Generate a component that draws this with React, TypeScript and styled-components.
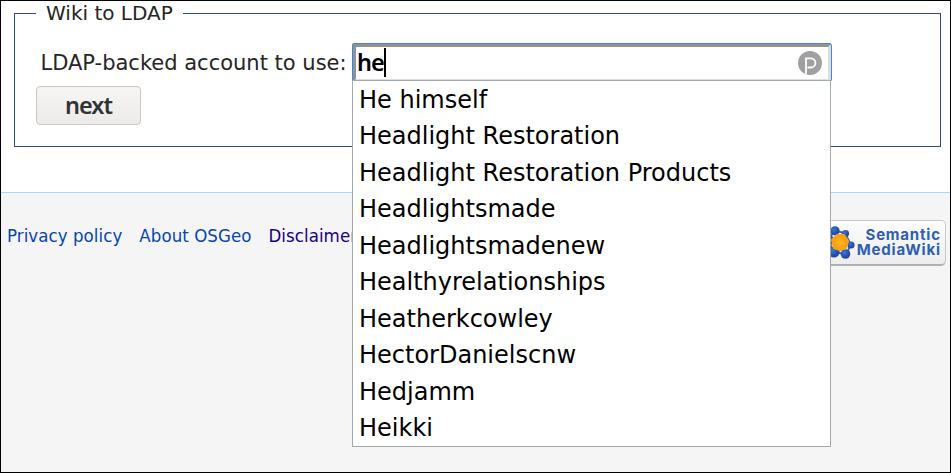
import React from "react";
import styled, { createGlobalStyle } from "styled-components";

const GlobalStyle = createGlobalStyle`
  *, *::before, *::after { box-sizing: border-box; }
  body { margin: 0; background: #fff; }
`;

const Page = styled.div`
  width: 951px;
  height: 473px;
  border: 1px solid #000;
  overflow: hidden;
  display: flex;
  flex-direction: column;
  background: #fff;
  color: #252525;
  font-family: "DejaVu Sans", sans-serif;
`;

const Content = styled.main`
  height: 191px;
  flex: none;
  padding: 0 9px 0 13px;
`;

const Fieldset = styled.fieldset`
  height: 146px;
  min-width: 0;
  margin: 0;
  padding: 0 21px;
  border: 1px solid #2a4b8d;
`;

const Legend = styled.legend`
  height: 25px;
  padding: 0 10px;
  font-size: 20px;
  line-height: 25px;
  white-space: nowrap;
`;

const FormRow = styled.div`
  display: flex;
  height: 38px;
  margin-top: 17px;
  padding-left: 4.5px;
`;

const Label = styled.label`
  width: 311.5px;
  flex: none;
  font-size: 21px;
  line-height: 40px;
  white-space: nowrap;
`;

const Combo = styled.div`
  position: relative;
  width: 480px;
  height: 39px;
  flex: none;
`;

const Field = styled.div`
  display: flex;
  align-items: flex-start;
  height: 39px;
  padding: 0 6px 0 1px;
  background: #fff;
  border: 4px solid;
  border-color: #929292 #dedede #dedede #929292;
  border-bottom-width: 3px;
  border-radius: 3px;
  &::after {
    content: "";
    position: absolute;
    inset: 0;
    border: 1px solid #3d86e0;
    border-radius: 3px;
  }
`;

const Typed = styled.span`
  width: 27px;
  color: #000;
  font: 600 23.5px/30px "Noto Sans", sans-serif;
  letter-spacing: -1px;
`;

const Caret = styled.span`
  width: 2px;
  height: 29px;
  margin-top: 1px;
  background: #000;
`;

const FieldIcon = styled.svg`
  width: 24px;
  height: 24px;
  margin: 4px 0 0 auto;
`;

const Suggestions = styled.ul`
  position: absolute;
  top: 37px;
  left: 0;
  z-index: 2;
  width: 479px;
  height: 367px;
  margin: 0;
  padding: 0.5px 6px 0;
  list-style: none;
  background: #fff;
  border: 1px solid #a2a9b1;
`;

const Suggestion = styled.li`
  height: 36.5px;
  color: #000;
  font-size: 24px;
  line-height: 36.5px;
  white-space: nowrap;
`;

const NextButton = styled.button`
  display: block;
  width: 105px;
  height: 39px;
  margin-top: 5px;
  padding: 0;
  border: 1px solid #cdc7c2;
  border-radius: 4px;
  background: linear-gradient(#f6f5f4, #edebe9);
  color: #2e3436;
  font: 600 23.5px/37px "Noto Sans", sans-serif;
  letter-spacing: -1px;
`;

const Footer = styled.footer`
  display: flex;
  justify-content: space-between;
  flex: 1;
  padding: 27px 4px 0 6px;
  background: #f5f5f5;
  border-top: 1px solid #a7d7f9;
`;

const Links = styled.nav`
  display: flex;
  gap: 17px;
  padding-top: 5px;
`;

const FooterLink = styled.a<{ $visited?: boolean }>`
  color: ${(p) => (p.$visited ? "#1b0080" : "#0645ad")};
  font-family: "DejaVu Sans Condensed", "DejaVu Sans", sans-serif;
  font-stretch: condensed;
  font-size: 18.5px;
  letter-spacing: 0.06px;
  line-height: 22px;
  white-space: nowrap;
`;

const Badge = styled.div`
  display: flex;
  align-items: center;
  justify-content: space-between;
  width: 132px;
  height: 46px;
  padding: 0 5px 0 3px;
  border: 1px solid #c8c8c8;
  border-width: 1px 1px 2px;
  border-bottom-color: #b0b0b0;
  border-radius: 5px;
  background: linear-gradient(#fdfdfd, #ededed);
`;

const Molecule = styled.svg`
  width: 38px;
  height: 34px;
  flex: none;
`;

const BadgeText = styled.div`
  display: flex;
  flex-direction: column;
  align-items: flex-end;
  color: #2d5fb5;
`;

const BadgeLine = styled.span`
  font: 700 15px/14.5px Inter, sans-serif;
  letter-spacing: 0.8px;
  margin-right: -0.8px;
`;

const names = [
  "He himself",
  "Headlight Restoration",
  "Headlight Restoration Products",
  "Headlightsmade",
  "Headlightsmadenew",
  "Healthyrelationships",
  "Heatherkcowley",
  "HectorDanielscnw",
  "Hedjamm",
  "Heikki",
];

export default function App() {
  return (
    <>
      <GlobalStyle />
      <Page>
        <Content>
          <Fieldset>
            <Legend>Wiki to LDAP</Legend>
            <FormRow>
              <Label>LDAP-backed account to use:</Label>
              <Combo>
                <Field>
                  <Typed>he</Typed>
                  <Caret />
                  <FieldIcon viewBox="0 0 24 24">
                    <circle cx="12" cy="12" r="12" fill="#a0a0a0" />
                    <path
                      d="M8 23.5V7.3H12.8a4.6 4.6 0 0 1 0 9.2H9.5"
                      fill="none"
                      stroke="#fff"
                      strokeWidth="1.8"
                    />
                  </FieldIcon>
                </Field>
                <Suggestions>
                  {names.map((n) => (
                    <Suggestion key={n}>{n}</Suggestion>
                  ))}
                </Suggestions>
              </Combo>
            </FormRow>
            <NextButton>next</NextButton>
          </Fieldset>
        </Content>
        <Footer>
          <Links>
            <FooterLink>Privacy policy</FooterLink>
            <FooterLink>About OSGeo</FooterLink>
            <FooterLink $visited>Disclaimers</FooterLink>
          </Links>
          <Badge>
            <Molecule viewBox="0 0 38 34">
              <defs>
                <radialGradient id="core">
                  <stop offset="0" stopColor="#ffb81c" />
                  <stop offset="1" stopColor="#f39a10" />
                </radialGradient>
                <radialGradient id="atom" cx="0.4" cy="0.35">
                  <stop offset="0" stopColor="#3f74d6" />
                  <stop offset="1" stopColor="#1c4cab" />
                </radialGradient>
              </defs>
              <path
                d="M16 4.5L27 7L33 19L28 28L15 26L11 14Z"
                fill="none"
                stroke="#5a5f78"
                strokeWidth="2"
              />
              <g fill="url(#atom)">
                <circle cx="17" cy="4.8" r="4.6" />
                <circle cx="27.5" cy="7.5" r="3.6" />
                <circle cx="33" cy="19" r="3.6" />
                <circle cx="27.5" cy="28" r="4.8" />
                <circle cx="16" cy="26" r="5.6" />
                <circle cx="11" cy="14" r="5" />
              </g>
              <path
                d="M19 9L26 9L30 15L28 22L22 24L16 22L14 14Z"
                fill="url(#core)"
                stroke="#f6a314"
                strokeWidth="2"
                strokeLinejoin="round"
              />
            </Molecule>
            <BadgeText>
              <BadgeLine>Semantic</BadgeLine>
              <BadgeLine>MediaWiki</BadgeLine>
            </BadgeText>
          </Badge>
        </Footer>
      </Page>
    </>
  );
}
